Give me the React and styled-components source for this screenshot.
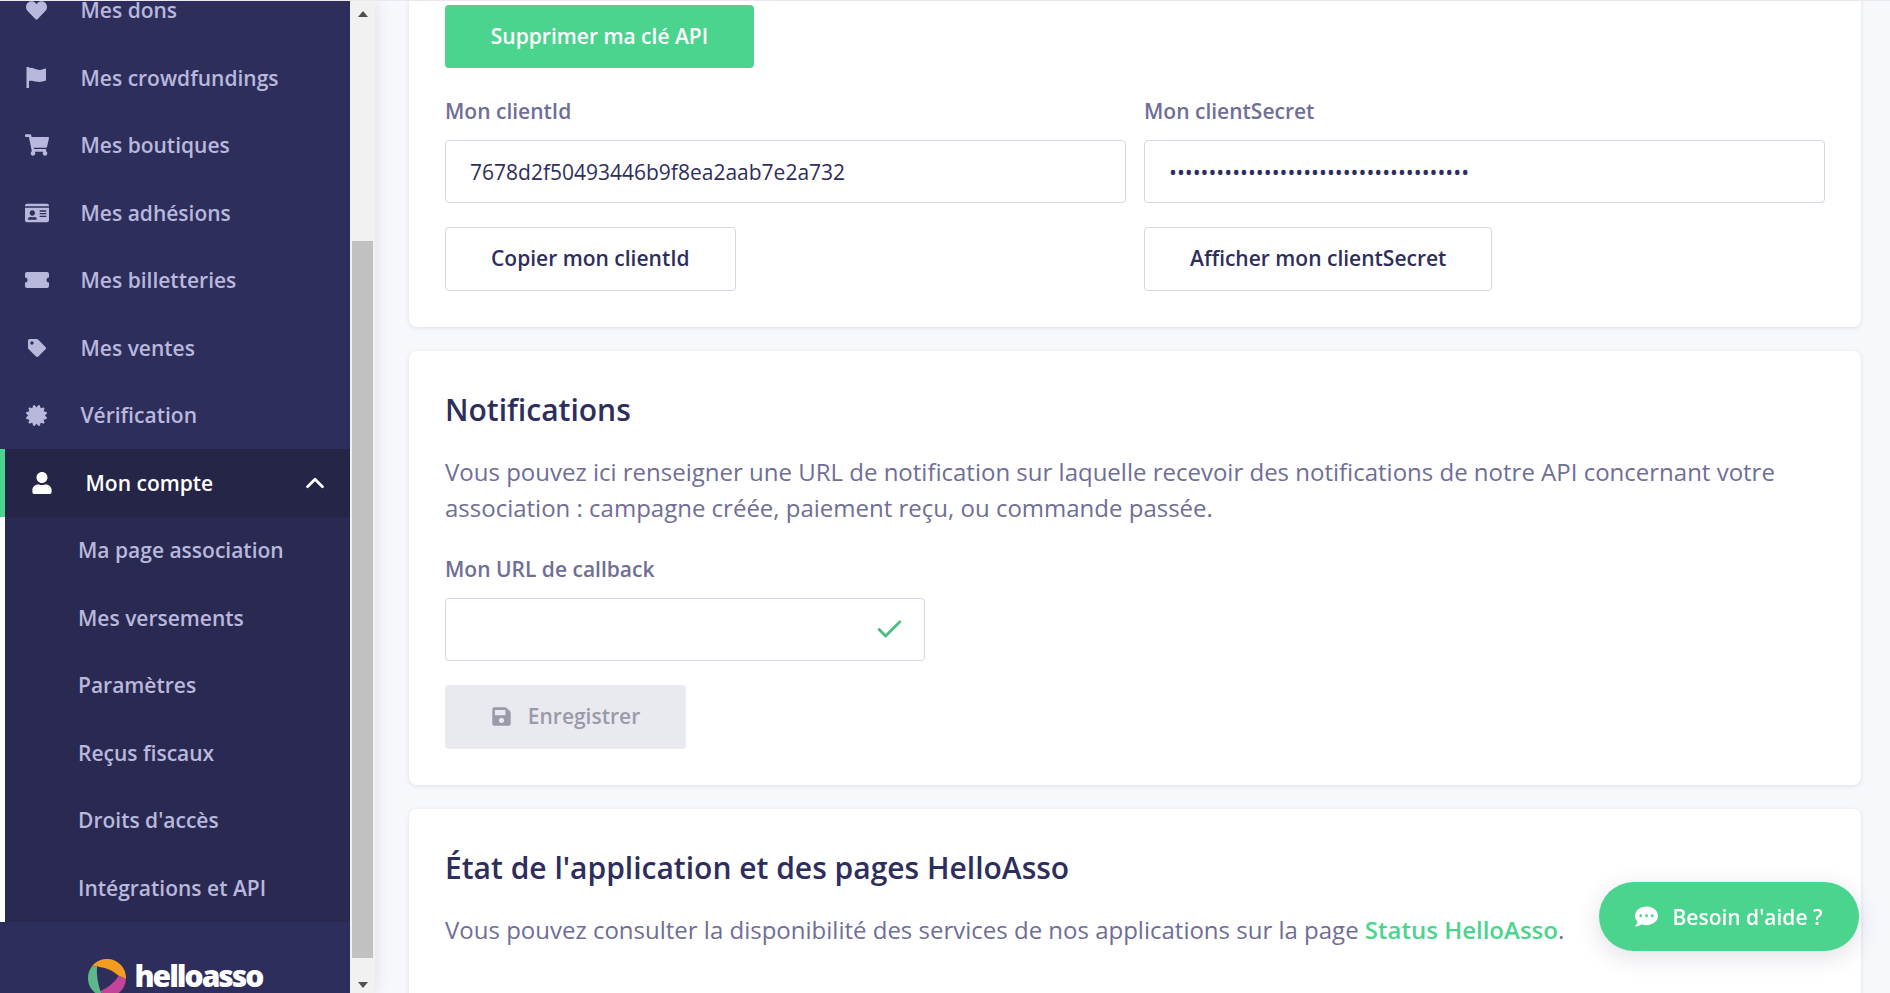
import styled, { createGlobalStyle } from "styled-components";
import {
  FaHeart,
  FaShoppingCart,
  FaIdCard,
  FaTag,
  FaCertificate,
  FaUser,
  FaSave,
  FaCommentDots,
} from "react-icons/fa";
import { ChevronUp, Check } from "lucide-react";

const GlobalStyle = createGlobalStyle`
  html, body {
    margin: 0;
    height: 100%;
    overflow: hidden;
    background: #f7f8fc;
  }
  * {
    box-sizing: border-box;
  }
  body {
    font-family: "Open Sans", "Liberation Sans", sans-serif;
  }
`;

const Page = styled.div`
  display: flex;
  height: 993px;
  border-top: 1px solid #ebe7f1;
  overflow: hidden;
`;

const Aside = styled.aside`
  display: flex;
  flex: 0 0 375px;
  height: 100%;
  box-shadow: 2px 0 12px rgba(46, 46, 92, 0.1);
  z-index: 1;
`;

const Sidebar = styled.nav`
  display: flex;
  flex-direction: column;
  width: 350px;
  background: #2e2e5c;
  overflow: hidden;
`;

const MenuList = styled.div`
  display: flex;
  flex-direction: column;
  margin-top: -24.5px;
`;

const MenuItem = styled.div`
  display: flex;
  align-items: center;
  flex: 0 0 67.5px;
  height: 67.5px;
  color: #b8b8dc;
  font-size: 21px;
  font-weight: 600;
`;

const MenuIcon = styled.span`
  display: flex;
  justify-content: center;
  flex: none;
  width: 80.5px;
  padding-right: 7px;

  svg {
    flex: none;
    width: ${(props) => props.$size}px;
    height: ${(props) => props.$size}px;
  }
`;

const ActiveItem = styled(MenuItem)`
  border-left: 5px solid #4bd48d;
  background: #252547;
  color: #fff;
`;

const Caret = styled.span`
  display: flex;
  margin-left: auto;
  padding-right: 20px;
`;

const SubMenu = styled.div`
  display: flex;
  flex-direction: column;
  border-left: 5px solid #fff;
  background: #2a2952;
`;

const SubItem = styled(MenuItem)`
  padding-left: 73px;
`;

const LogoRow = styled.div`
  display: flex;
  justify-content: center;
  align-items: flex-start;
  gap: 9px;
  padding-top: 37px;
`;

const LogoText = styled.span`
  color: #fff;
  font-family: "Open Sans", sans-serif;
  font-size: 30px;
  font-weight: 800;
  line-height: 34px;
  letter-spacing: -2px;
`;

const ScrollTrack = styled.div`
  display: flex;
  flex-direction: column;
  align-items: center;
  width: 25px;
  background: #f1f1f1;
`;

const ScrollArrow = styled.span`
  width: 0;
  height: 0;
  border-left: 5.5px solid transparent;
  border-right: 5.5px solid transparent;
  border-bottom: ${(props) => (props.$down ? "none" : "6px solid #505050")};
  border-top: ${(props) => (props.$down ? "6px solid #505050" : "none")};
  margin: ${(props) => (props.$down ? "24px 0 0" : "10px 0 0")};
`;

const ScrollThumb = styled.div`
  width: 21px;
  height: 717px;
  margin-top: 224px;
  background: #c1c1c1;
`;

const Main = styled.main`
  display: flex;
  flex-direction: column;
  flex: 1;
  gap: 24px;
  min-width: 0;
  padding: 0 29px 0 34px;
  overflow: hidden;
`;

const Card = styled.section`
  flex: none;
  padding: 36px;
  border-radius: 8px;
  background: #fff;
  box-shadow: 0 1px 4px rgba(46, 46, 92, 0.12);
`;

const TopCard = styled(Card)`
  margin-top: -32px;
`;

const LastCard = styled(Card)`
  min-height: 320px;
`;

const GreenButton = styled.button`
  display: block;
  width: 309px;
  height: 63px;
  margin-bottom: 25px;
  padding: 0 0 2px;
  border: 0;
  border-radius: 4px;
  background: #4bd48d;
  color: #fff;
  font: 600 21px "Open Sans", sans-serif;
`;

const Columns = styled.div`
  display: grid;
  grid-template-columns: 1fr 1fr;
  gap: 18px;
`;

const Field = styled.div`
  display: flex;
  flex-direction: column;
  align-items: flex-start;
`;

const Label = styled.label`
  margin-bottom: 11px;
  color: #6f6e96;
  font-size: 21px;
  font-weight: 600;
  line-height: 36px;
`;

const Input = styled.input`
  width: 100%;
  height: 63px;
  padding: 0 24px;
  border: 1px solid #d6d5e4;
  border-radius: 4px;
  background: #fff;
  color: #2e2e5c;
  font: 400 21px "Open Sans", sans-serif;
  outline: none;
`;

const OutlineButton = styled.button`
  height: 64px;
  margin-top: 24px;
  padding: 0 45px 2px;
  border: 1px solid #d6d5e4;
  border-radius: 4px;
  background: #fff;
  color: #2e2e5c;
  font: 600 21px "Open Sans", sans-serif;
`;

const Title = styled.h2`
  margin: 0 0 21px;
  color: #2e2e5c;
  font-size: 30px;
  font-weight: 600;
  line-height: 46px;
`;

const Text = styled.p`
  margin: 0;
  color: #6f6e96;
  font-size: 24px;
  line-height: 36px;
`;

const Link = styled.a`
  color: #4bd48d;
  font-weight: 600;
  text-decoration: none;
`;

const CallbackField = styled(Field)`
  margin-top: 25px;
`;

const InputWrap = styled.div`
  position: relative;
  width: 480px;
`;

const InputCheck = styled.span`
  position: absolute;
  top: 16px;
  right: 20px;
  display: flex;
  color: #48bf7f;
`;

const DisabledButton = styled.button`
  display: flex;
  align-items: center;
  justify-content: center;
  gap: 16px;
  width: 241px;
  height: 64px;
  margin-top: 24px;
  padding: 0 0 2px;
  border: 0;
  border-radius: 4px;
  background: #e9eaef;
  color: #9a9aa8;
  font: 600 21px "Open Sans", sans-serif;
`;

const HelpButton = styled.button`
  position: fixed;
  right: 31px;
  bottom: 42px;
  display: flex;
  align-items: center;
  justify-content: center;
  gap: 14px;
  width: 260px;
  height: 69px;
  border: 0;
  border-radius: 35px;
  background: #4bd48d;
  box-shadow: 0 6px 24px rgba(46, 46, 92, 0.14);
  color: #fff;
  font: 600 21px "Open Sans", sans-serif;
`;

const FlagIcon = () => (
  <svg viewBox="0 0 20 21" fill="currentColor">
    <path d="M0 0H2.5V21H0Z" />
    <path d="M2.5 1C6 0 9 3 13 3C15 3 18 1.5 19.5 1.5V13.5C17 14 15 15 13 15C9 15 6 13 2.5 14Z" />
  </svg>
);

const TicketIcon = () => (
  <svg viewBox="0 0 24 16" fill="currentColor">
    <path d="M2 0H22a2 2 0 0 1 2 2V5.5a2.5 2.5 0 0 0 0 5V14a2 2 0 0 1-2 2H2a2 2 0 0 1-2-2V10.5a2.5 2.5 0 0 0 0-5V2a2 2 0 0 1 2-2Z" />
  </svg>
);

const LogoMark = () => (
  <svg width="38" height="38" viewBox="0 0 38 38">
    <path d="M3.5 8A19 19 0 0 1 38 20L29 16 9 7Z" fill="#f39c1f" />
    <path d="M38 20A19 19 0 0 1 16 37.8L12 31 29 16Z" fill="#c2459a" />
    <path d="M16 37.8A19 19 0 0 1 3.5 8L9 7 12 31Z" fill="#5cb888" />
    <path d="M9 8C16 8 25 11 30.5 17C27 23 19.5 29 12.5 32C9.5 24 8.5 15 9 8Z" fill="#2e2e5c" />
  </svg>
);

const menu = [
  ["Mes dons", FaHeart, 21],
  ["Mes crowdfundings", FlagIcon, 21],
  ["Mes boutiques", FaShoppingCart, 24],
  ["Mes adhésions", FaIdCard, 24],
  ["Mes billetteries", TicketIcon, 24],
  ["Mes ventes", FaTag, 18],
  ["Vérification", FaCertificate, 21],
];

const subMenu = [
  "Ma page association",
  "Mes versements",
  "Paramètres",
  "Reçus fiscaux",
  "Droits d'accès",
  "Intégrations et API",
];

export default function App() {
  return (
    <Page>
      <GlobalStyle />
      <Aside>
        <Sidebar>
          <MenuList>
            {menu.map(([label, Icon, size]) => (
              <MenuItem key={label}>
                <MenuIcon $size={size}>
                  <Icon />
                </MenuIcon>
                {label}
              </MenuItem>
            ))}
            <ActiveItem>
              <MenuIcon $size={22}>
                <FaUser />
              </MenuIcon>
              Mon compte
              <Caret>
                <ChevronUp size={30} strokeWidth={2.2} />
              </Caret>
            </ActiveItem>
            <SubMenu>
              {subMenu.map((label) => (
                <SubItem key={label}>{label}</SubItem>
              ))}
            </SubMenu>
          </MenuList>
          <LogoRow>
            <LogoMark />
            <LogoText>helloasso</LogoText>
          </LogoRow>
        </Sidebar>
        <ScrollTrack>
          <ScrollArrow />
          <ScrollThumb />
          <ScrollArrow $down />
        </ScrollTrack>
      </Aside>
      <Main>
        <TopCard>
          <GreenButton>Supprimer ma clé API</GreenButton>
          <Columns>
            <Field>
              <Label>Mon clientId</Label>
              <Input readOnly value="7678d2f50493446b9f8ea2aab7e2a732" />
              <OutlineButton>Copier mon clientId</OutlineButton>
            </Field>
            <Field>
              <Label>Mon clientSecret</Label>
              <Input readOnly type="password" value="abcdefghijklmnopqrstuvwxyz012345678901" />
              <OutlineButton>Afficher mon clientSecret</OutlineButton>
            </Field>
          </Columns>
        </TopCard>
        <Card>
          <Title>Notifications</Title>
          <Text>
            Vous pouvez ici renseigner une URL de notification sur laquelle recevoir des
            notifications de notre API concernant votre association : campagne créée, paiement
            reçu, ou commande passée.
          </Text>
          <CallbackField>
            <Label>Mon URL de callback</Label>
            <InputWrap>
              <Input readOnly />
              <InputCheck>
                <Check size={31} strokeWidth={2.2} />
              </InputCheck>
            </InputWrap>
            <DisabledButton>
              <FaSave size={21} />
              Enregistrer
            </DisabledButton>
          </CallbackField>
        </Card>
        <LastCard>
          <Title>État de l'application et des pages HelloAsso</Title>
          <Text>
            Vous pouvez consulter la disponibilité des services de nos applications sur la page{" "}
            <Link>Status HelloAsso</Link>.
          </Text>
        </LastCard>
      </Main>
      <HelpButton>
        <FaCommentDots size={23} />
        Besoin d'aide ?
      </HelpButton>
    </Page>
  );
}
